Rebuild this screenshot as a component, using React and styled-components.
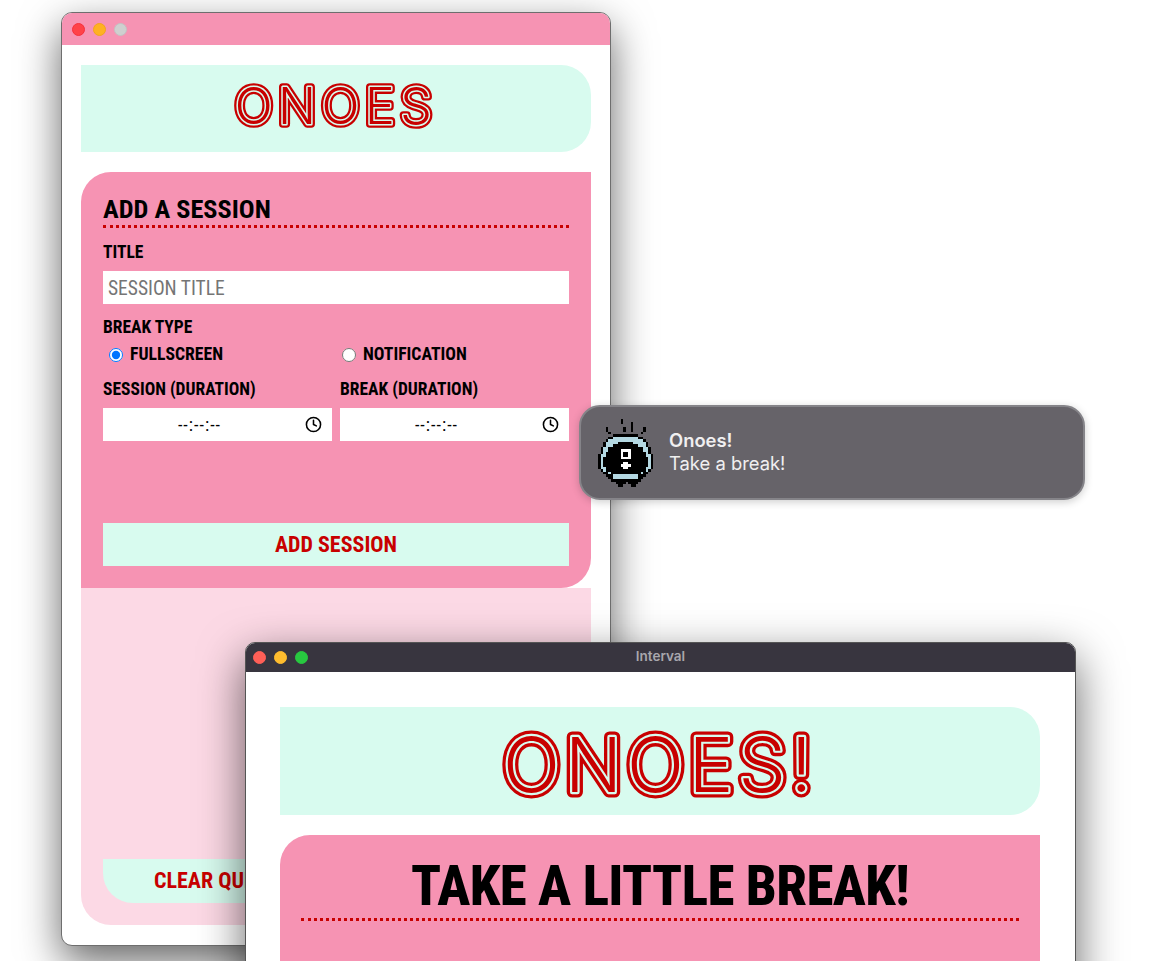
import React from "react";
import styled, { createGlobalStyle } from "styled-components";

const GlobalStyle = createGlobalStyle`
  html, body {
    margin: 0;
    height: 961px;
    overflow: hidden;
    background: #fff;
  }
  * { box-sizing: border-box; }
`;

const PINK = "#f693b3";
const LIGHT_PINK = "#fcd9e5";
const MINT = "#d8fbef";
const RED = "#c80000";
const CONDENSED = `"Roboto Condensed", Roboto, "Liberation Sans", sans-serif`;

const ICON_ROWS = [
  ".........K............",
  ".........K...K........",
  ".............K........",
  "...K......K..K....K...",
  "...K......K..K....K...",
  "....K............K....",
  "......KKKKKKKKKK......",
  "....KKBBBBBBBBBBKK....",
  "...KBBBBBBBBBBBBBBK...",
  "..KBBBBBKKKKKKBBBBBK..",
  "..KBBBKKKKKKKKKKBBBK..",
  ".KBBKKKKKKKKKKKKKKBBK.",
  ".KBBKKKKKWWWWKKKKKBBK.",
  ".KBKKKKKKWKKWKKKKKKBK.",
  "KBBKKKKKKWKKWKKKKKKBBK",
  "KBKKKKKKKWWWWKKKKKKKBK",
  "KBKKKKKKKKKKKKKKKKKKBK",
  "KBKKKKKKKKWWKKKKKKKKBK",
  "KBKKKKKKKWWWWKKKKKKKBK",
  "KBBKKKKKKKWWKKKKKKKBBK",
  ".KBKKKKKKKKKKKKKKKKBK.",
  "..KKBKKKKKKKKKKKKBKK..",
  "...KKKBBBBBBBBBBKKK...",
  "....KKBBBBBBBBBBKK....",
  ".....KKKKKKKKKKKK.....",
  ".......KKKK.KKKK......",
  "........KK...KK.......",
];
const ICON_COLORS = { K: "#000", B: "#b4d8e2", W: "#fff" };

function PixelIcon() {
  return (
    <IconSvg viewBox="0 0 22 27" shapeRendering="crispEdges">
      {ICON_ROWS.map((row, y) =>
        row.split("").map((c, x) =>
          ICON_COLORS[c] ? <rect key={`${x}-${y}`} x={x} y={y} width="1.02" height="1.02" fill={ICON_COLORS[c]} /> : null
        )
      )}
    </IconSvg>
  );
}

function ClockIcon() {
  return (
    <svg width="17" height="17" viewBox="0 0 24 24" fill="none" stroke="#000" strokeWidth="2.2" strokeLinecap="round" strokeLinejoin="round">
      <circle cx="12" cy="12" r="10" />
      <path d="M12 6v6l4 2" />
    </svg>
  );
}

function TimeField() {
  return (
    <TimeBox>
      <TimeText>--:--:--</TimeText>
      <ClockSlot><ClockIcon /></ClockSlot>
    </TimeBox>
  );
}

// inline-lettered title: same text painted three times (thick red, mint, thin red)
function Logo({ id, text, width, height, size, baseline, outer, gap, spacing }) {
  return (
    <svg width={width} height={height} viewBox={`0 0 ${width} ${height}`} role="img" aria-label={text}>
      <defs>
        <LogoText id={id} x={width / 2} y={baseline} $size={size} $spacing={spacing} textAnchor="middle">{text}</LogoText>
      </defs>
      <use href={`#${id}`} fill={RED} stroke={RED} strokeWidth={outer} strokeLinejoin="round" />
      <use href={`#${id}`} fill={MINT} stroke={MINT} strokeWidth={gap} strokeLinejoin="round" />
      <use href={`#${id}`} fill={RED} />
    </svg>
  );
}

export default function App() {
  return (
    <Desktop>
      <GlobalStyle />
      <MainWindow>
        <MainBar>
          <Light $color="#ff4249" $edge="#f5303c" />
          <Light $color="#ffb122" $edge="#f2a51c" />
          <Light $color="#cfcfcf" $edge="#c2c2c2" />
        </MainBar>
        <MainBody>
          <Banner $height={87}>
            <Logo id="logo-small" text="ONOES" width={260} height={87} size={50} baseline={58.5} outer={7.6} gap={3} spacing={5.5} />
          </Banner>
          <SessionPanel>
            <PanelTitle>ADD A SESSION</PanelTitle>
            <Label>TITLE</Label>
            <TextInput placeholder="SESSION TITLE" />
            <BreakLabel>BREAK TYPE</BreakLabel>
            <FieldGrid>
              <RadioLabel $inset={5}><input type="radio" name="kind" defaultChecked />FULLSCREEN</RadioLabel>
              <RadioLabel $inset={1}><input type="radio" name="kind" />NOTIFICATION</RadioLabel>
              <DurationLabel>SESSION (DURATION)</DurationLabel>
              <DurationLabel>BREAK (DURATION)</DurationLabel>
              <TimeField />
              <TimeField />
            </FieldGrid>
            <AddButton>ADD SESSION</AddButton>
          </SessionPanel>
          <QueuePanel>
            <ClearButton>CLEAR QUEUE</ClearButton>
          </QueuePanel>
        </MainBody>
      </MainWindow>

      <Notification>
        <PixelIcon />
        <NoteText>
          <NoteTitle>Onoes!</NoteTitle>
          <span>Take a break!</span>
        </NoteText>
      </Notification>

      <BreakWindow>
        <DarkBar>
          <Light $color="#ff5f57" $edge="#ff5f57" />
          <Light $color="#febc2e" $edge="#febc2e" />
          <Light $color="#28c840" $edge="#28c840" />
          <BarTitle>Interval</BarTitle>
        </DarkBar>
        <BreakBody>
          <Banner $height={108}>
            <Logo id="logo-large" text="ONOES!" width={420} height={108} size={75} baseline={85} outer={11} gap={4.4} spacing={5} />
          </Banner>
          <BreakPanel>
            <BreakTitle>TAKE A LITTLE BREAK!</BreakTitle>
          </BreakPanel>
        </BreakBody>
      </BreakWindow>
    </Desktop>
  );
}

const Desktop = styled.div`
  position: relative;
  width: 1164px;
  height: 961px;
  overflow: hidden;
  background: #fff;
`;

const MainWindow = styled.section`
  position: absolute;
  left: 61px;
  top: 12px;
  width: 550px;
  height: 934px;
  display: flex;
  flex-direction: column;
  background: #fff;
  border: 1px solid #6e6e6e;
  border-radius: 11px;
  overflow: hidden;
  box-shadow: 0 16px 42px rgba(0, 0, 0, 0.6);
`;

const MainBar = styled.header`
  flex: none;
  height: 32px;
  display: flex;
  align-items: center;
  gap: 8px;
  padding-left: 10px;
  background: ${PINK};
`;

const Light = styled.span`
  width: 13px;
  height: 13px;
  border-radius: 50%;
  background: ${(p) => p.$color};
  border: 1px solid ${(p) => p.$edge};
`;

const MainBody = styled.div`
  flex: 1;
  display: flex;
  flex-direction: column;
  padding: 20px 19px;
`;

const Banner = styled.div`
  height: ${(p) => p.$height}px;
  flex: none;
  display: flex;
  align-items: center;
  justify-content: center;
  background: ${MINT};
  border-radius: 0 30px 30px 0;
`;

const LogoText = styled.text`
  font-family: Inter, Roboto, "Liberation Sans", sans-serif;
  font-size: ${(p) => p.$size}px;
  font-weight: 300;
  letter-spacing: ${(p) => p.$spacing}px;
`;

const SessionPanel = styled.div`
  flex: none;
  height: 416px;
  margin-top: 20px;
  padding: 22px;
  display: flex;
  flex-direction: column;
  background: ${PINK};
  border-radius: 30px 0 30px 0;
  font-family: ${CONDENSED};
  font-stretch: condensed;
  font-weight: 700;
  color: #000;
`;

const PanelTitle = styled.h2`
  margin: 0;
  height: 34px;
  font-size: 26.3px;
  line-height: 30px;
  font-weight: 700;
  border-bottom: 3px dotted ${RED};
`;

const Label = styled.label`
  display: block;
  margin-top: 15px;
  height: 18px;
  font-size: 17.5px;
  line-height: 18px;
`;

const TextInput = styled.input`
  display: block;
  width: 100%;
  height: 33px;
  margin-top: 10px;
  padding: 1px 5px 0;
  border: 0;
  outline: 0;
  background: #fff;
  font-family: ${CONDENSED};
  font-stretch: condensed;
  font-size: 19.5px;
  &::placeholder { color: #757575; }
`;

const BreakLabel = styled(Label)`
  margin-top: 14px;
`;

const FieldGrid = styled.div`
  display: grid;
  grid-template-columns: 229px 229px;
  column-gap: 8px;
`;

const RadioLabel = styled.label`
  display: flex;
  align-items: center;
  height: 19px;
  margin-top: 9px;
  padding-left: ${(p) => p.$inset}px;
  font-size: 17.7px;
  line-height: 19px;
  input {
    width: 14px;
    height: 14px;
    margin: 0 7px 0 1px;
  }
`;

const DurationLabel = styled.div`
  margin-top: 16px;
  height: 18px;
  font-size: 17.5px;
  line-height: 18px;
`;

const TimeBox = styled.div`
  position: relative;
  height: 33px;
  margin-top: 10px;
  padding-right: 36px;
  display: flex;
  align-items: center;
  justify-content: center;
  background: #fff;
`;

const TimeText = styled.span`
  font-size: 18px;
  font-weight: 400;
  font-stretch: normal;
  letter-spacing: 1px;
`;

const ClockSlot = styled.span`
  position: absolute;
  right: 10px;
  top: 8px;
  display: flex;
`;

const AddButton = styled.button`
  margin-top: auto;
  height: 43px;
  border: 0;
  background: ${MINT};
  color: ${RED};
  font-family: ${CONDENSED};
  font-stretch: condensed;
  font-weight: 700;
  font-size: 22px;
`;

const QueuePanel = styled.div`
  flex: 1;
  display: flex;
  flex-direction: column;
  justify-content: flex-end;
  padding: 0 22px 22px;
  background: ${LIGHT_PINK};
  border-radius: 0 0 0 30px;
`;

const ClearButton = styled.button`
  height: 44px;
  padding: 0 0 2px 51px;
  border: 0;
  border-radius: 0 0 30px 30px;
  background: ${MINT};
  color: ${RED};
  text-align: left;
  font-family: ${CONDENSED};
  font-stretch: condensed;
  font-weight: 700;
  font-size: 22px;
`;

const Notification = styled.aside`
  position: absolute;
  z-index: 2;
  left: 579px;
  top: 405px;
  width: 506px;
  height: 95px;
  display: flex;
  align-items: center;
  gap: 16px;
  padding: 0 0 0 17px;
  background: #666369;
  border: 2px solid #858489;
  border-radius: 21px;
  box-shadow: 0 2px 8px rgba(0, 0, 0, 0.2);
  font-family: Inter, "Liberation Sans", sans-serif;
  font-size: 18.4px;
  line-height: 23px;
  color: #f0eff0;
`;

const IconSvg = styled.svg`
  width: 55px;
  height: 68px;
  flex: none;
`;

const NoteText = styled.div`
  display: flex;
  flex-direction: column;
  margin-top: -2px;
`;

const NoteTitle = styled.strong`
  font-weight: 600;
`;

const BreakWindow = styled.section`
  position: absolute;
  z-index: 1;
  left: 245px;
  top: 642px;
  width: 831px;
  height: 500px;
  display: flex;
  flex-direction: column;
  background: #fff;
  border: 1px solid #555;
  border-radius: 10px 10px 0 0;
  box-shadow: 0 16px 46px rgba(0, 0, 0, 0.6);
`;

const DarkBar = styled.header`
  position: relative;
  flex: none;
  height: 29px;
  display: flex;
  align-items: center;
  gap: 8px;
  padding-left: 7px;
  background: #38353f;
  border-radius: 9px 9px 0 0;
`;

const BarTitle = styled.span`
  position: absolute;
  left: 0;
  right: 0;
  top: 5px;
  text-align: center;
  font-family: Inter, "Liberation Sans", sans-serif;
  font-size: 13.5px;
  line-height: 16px;
  font-weight: 600;
  color: #a9a7ad;
`;

const BreakBody = styled.div`
  flex: 1;
  padding: 35px 35px 0 34px;
`;

const BreakPanel = styled.div`
  height: 300px;
  margin-top: 20px;
  padding: 20px 21px 0;
  background: ${PINK};
  border-radius: 30px 0 0 0;
`;

const BreakTitle = styled.h2`
  margin: 0;
  height: 66px;
  text-align: center;
  font-family: ${CONDENSED};
  font-stretch: condensed;
  font-size: 55px;
  line-height: 62px;
  letter-spacing: -0.6px;
  font-weight: 800;
  color: #000;
  border-bottom: 3px dotted ${RED};
`;
